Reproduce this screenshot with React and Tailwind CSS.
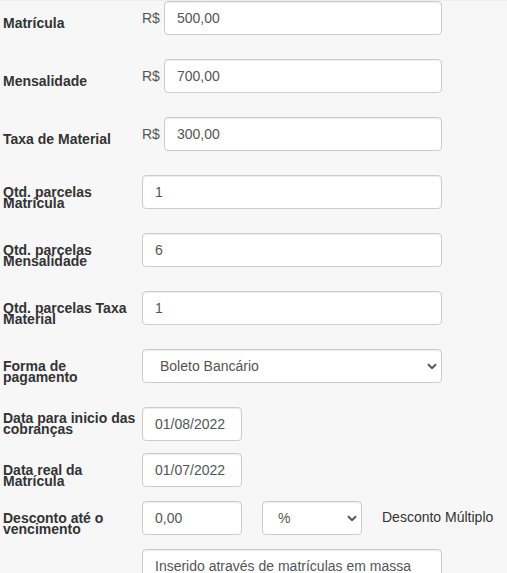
import React from "react";

const inputCls =
  "h-[34px] rounded-[4px] border border-[#cccccc] bg-white px-3 text-[14px] leading-[20px] text-[#555555] shadow-[inset_0_1px_1px_rgba(0,0,0,0.075)] outline-none";

function Label({ children, h = "h-[45px]" }) {
  return (
    <div
      className={`${h} w-[142px] shrink-0 pl-[3px] flex items-center font-bold text-[14px] leading-[11px] text-[#333333]`}
    >
      <span>{children}</span>
    </div>
  );
}

function Chevron() {
  return (
    <svg
      width="10"
      height="7"
      viewBox="0 0 10 7"
      className="absolute right-[5px] top-[14px]"
      aria-hidden="true"
    >
      <path d="M1 1.2 L5 5.2 L9 1.2" fill="none" stroke="#555555" strokeWidth="2" />
    </svg>
  );
}

function MoneyRow({ label, value }) {
  return (
    <div className="flex h-[58px] items-start">
      <Label>{label}</Label>
      <span className="w-[22px] shrink-0 pt-[7px] text-[14px] leading-[20px] text-[#555555]">
        R$
      </span>
      <input className={`${inputCls} w-[278px]`} defaultValue={value} readOnly />
    </div>
  );
}

function TextRow({ label, value }) {
  return (
    <div className="flex h-[58px] items-start">
      <Label>{label}</Label>
      <input className={`${inputCls} w-[300px]`} defaultValue={value} readOnly />
    </div>
  );
}

export default function App() {
  return (
    <div
      className="min-h-screen w-full overflow-hidden bg-[#f7f7f7]"
      style={{ fontFamily: '"Liberation Sans", Arial, sans-serif' }}
    >
      <div className="h-[1px] bg-[#ededed]" />
      <MoneyRow label="Matrícula" value="500,00" />
      <MoneyRow label="Mensalidade" value="700,00" />
      <MoneyRow label="Taxa de Material" value="300,00" />
      <TextRow label="Qtd. parcelas Matrícula" value="1" />
      <TextRow label="Qtd. parcelas Mensalidade" value="6" />
      <TextRow label="Qtd. parcelas Taxa Material" value="1" />

      <div className="flex h-[58px] items-start">
        <Label>Forma de pagamento</Label>
        <div className="relative w-[300px]">
          <div className={`${inputCls} w-[300px] flex items-center pl-[17px]`}>
            Boleto Bancário
          </div>
          <Chevron />
        </div>
      </div>

      <div className="flex h-[46px] items-start">
        <Label h="h-[34px]">Data para inicio das cobranças</Label>
        <input className={`${inputCls} w-[100px]`} defaultValue="01/08/2022" readOnly />
      </div>

      <div className="flex h-[48px] items-start">
        <Label>Data real da Matrícula</Label>
        <input className={`${inputCls} w-[100px]`} defaultValue="01/07/2022" readOnly />
      </div>

      <div className="flex h-[48px] items-start">
        <Label>Desconto até o vencimento</Label>
        <input className={`${inputCls} w-[100px]`} defaultValue="0,00" readOnly />
        <div className="relative ml-[20px] w-[100px]">
          <div className={`${inputCls} w-[100px] flex items-center pl-[15px]`}>%</div>
          <Chevron />
        </div>
        <span className="ml-[20px] pt-[6px] text-[14px] leading-[20px] text-[#333333]">
          Desconto Múltiplo
        </span>
      </div>

      <div className="flex items-start">
        <div className="w-[142px] shrink-0" />
        <input
          className={`${inputCls} w-[300px]`}
          defaultValue="Inserido através de matrículas em massa"
          readOnly
        />
      </div>
    </div>
  );
}
